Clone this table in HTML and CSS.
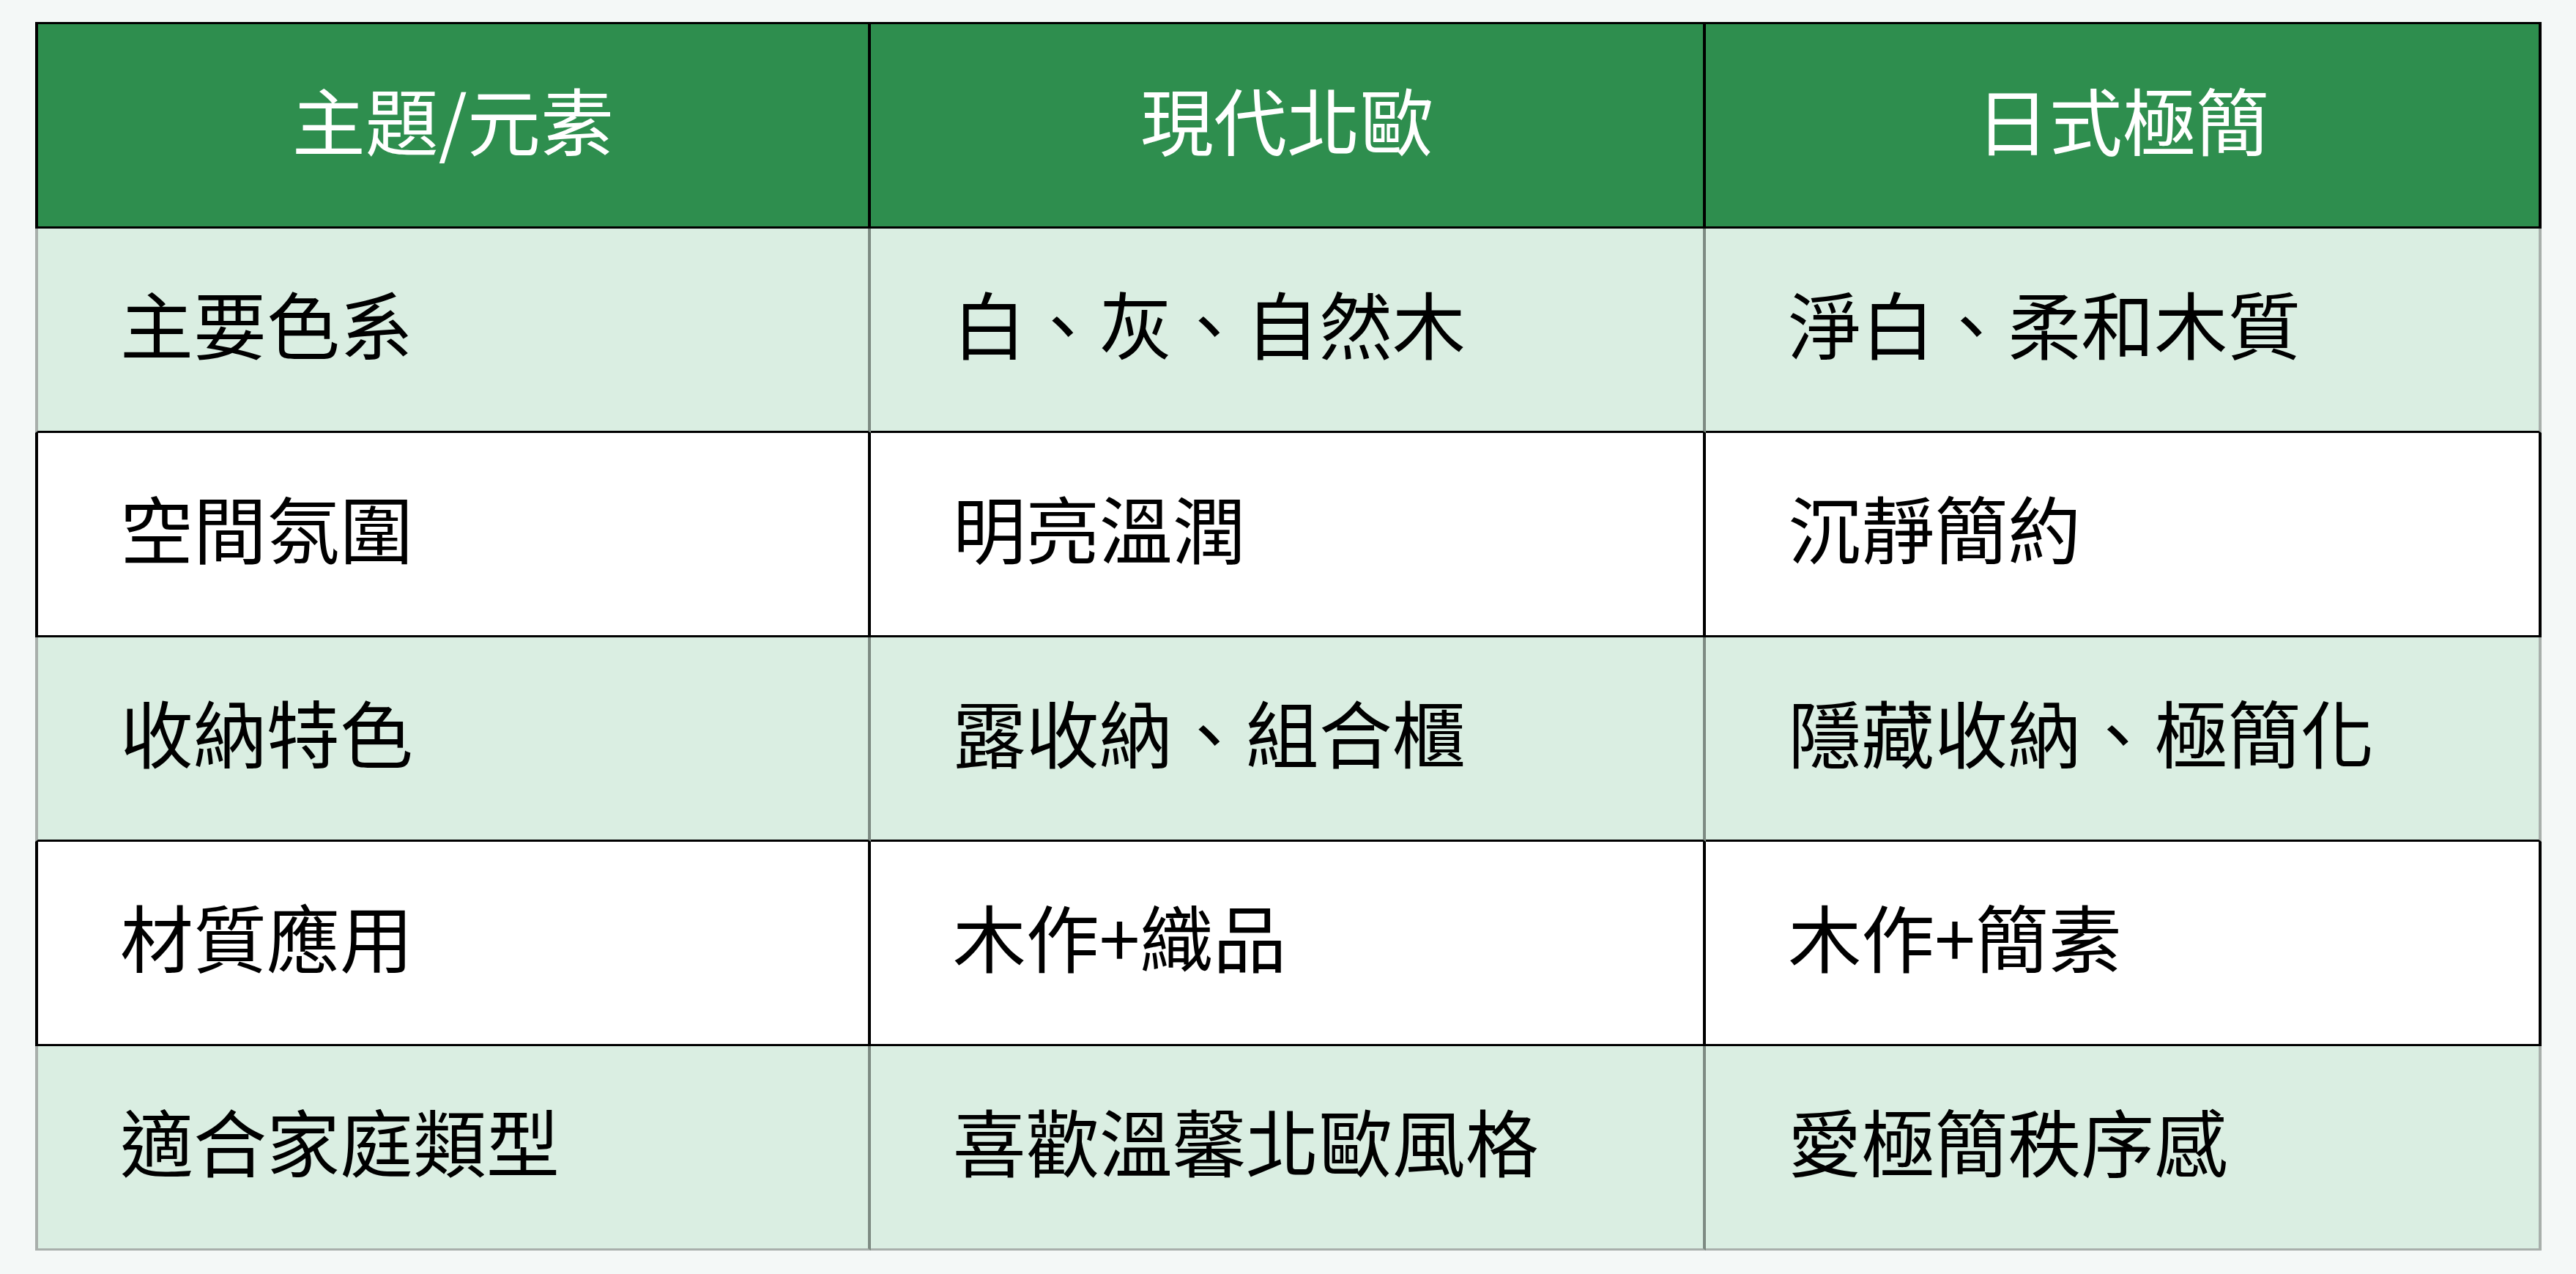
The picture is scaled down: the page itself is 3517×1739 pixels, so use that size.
FILE: index.html
```html
<!DOCTYPE html>
<html lang="zh-Hant">
<head>
<meta charset="utf-8">
<title>風格比較</title>
<link rel="stylesheet" href="styles.css">
</head>
<body>
<table class="compare">
  <thead>
    <tr class="head-row">
      <th>主題/元素</th>
      <th>現代北歐</th>
      <th>日式極簡</th>
    </tr>
  </thead>
  <tbody>
    <tr class="row tint">
      <td>主要色系</td>
      <td>白、灰、自然木</td>
      <td>淨白、柔和木質</td>
    </tr>
    <tr class="row plain">
      <td>空間氛圍</td>
      <td>明亮溫潤</td>
      <td>沉靜簡約</td>
    </tr>
    <tr class="row tint">
      <td>收納特色</td>
      <td>露收納、組合櫃</td>
      <td>隱藏收納、極簡化</td>
    </tr>
    <tr class="row plain">
      <td>材質應用</td>
      <td>木作+織品</td>
      <td>木作+簡素</td>
    </tr>
    <tr class="row tint last">
      <td>適合家庭類型</td>
      <td>喜歡溫馨北歐風格</td>
      <td>愛極簡秩序感</td>
    </tr>
  </tbody>
</table>
</body>
</html>
```

FILE: styles.css
```css
html, body {
  margin: 0;
  background: #f4f8f7;
}

body {
  padding: 30px 47px 0 48px;
  font-family: "Noto Sans CJK TC", "Noto Sans", sans-serif;
}

.compare {
  width: 3422px;
  table-layout: fixed;
  border-collapse: separate;
  border-spacing: 0;
  font-size: 100px;
  line-height: 1.2;
}

.compare th,
.compare td {
  border-right: 4px solid #000;
  border-bottom: 3px solid #000;
  vertical-align: middle;
  font-weight: 400;
  box-sizing: border-box;
}

.compare th:first-child,
.compare td:first-child {
  border-left: 4px solid #000;
}

.head-row th {
  background: #2e8e4e;
  color: #ffffff;
  text-align: center;
  border-top: 3px solid #000;
  height: 282px;
  padding: 0 0 18px 0;
}

.row td {
  color: #000;
  text-align: left;
  padding: 0 20px 20px 112px;
  height: 279px;
}

.tint td {
  background: #daeee2;
  border-right-color: #7d8a82;
}

.tint td:first-child {
  border-left-color: #a8afab;
}

.tint td:last-child {
  border-right-color: #a8afab;
}

.plain td {
  background: #ffffff;
}

.last td {
  border-bottom-color: #a8afab;
}
```
